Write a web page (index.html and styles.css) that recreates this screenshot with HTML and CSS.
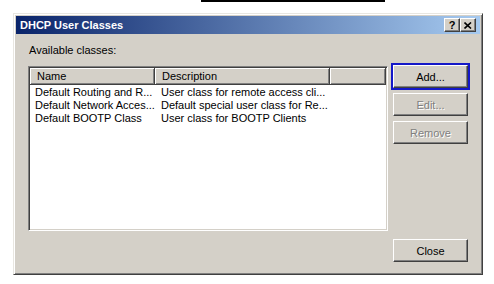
FILE: index.html
```html
<!DOCTYPE html>
<html lang="en">

<head>
    <meta charset="UTF-8">
    <title>DHCP User Classes</title>
    <link rel="stylesheet" href="styles.css">
</head>

<body>
    <div class="topline"></div>

    <div class="dialog">
        <div class="titlebar">
            <span class="title">DHCP User Classes</span>
            <div class="caption-btns">
                <span class="cbtn help">?</span>
                <span class="cbtn">
                    <svg width="8" height="7" viewBox="0 0 8 7">
                        <path d="M0.5 0.5 L7 6.5 M7 0.5 L0.5 6.5" stroke="#000" stroke-width="1.6" fill="none"/>
                    </svg>
                </span>
            </div>
        </div>

        <div class="content">
            <div class="main">
                <div class="label">Available classes:</div>
                <div class="listbox">
                    <div class="header">
                        <div class="hcell col-name">Name</div>
                        <div class="hcell col-desc">Description</div>
                        <div class="hcell col-rest"></div>
                    </div>
                    <div class="row">
                        <div class="cell col-name">Default Routing and R...</div>
                        <div class="cell col-desc">User class for remote access cli...</div>
                    </div>
                    <div class="row">
                        <div class="cell col-name">Default Network Acces...</div>
                        <div class="cell col-desc">Default special user class for Re...</div>
                    </div>
                    <div class="row">
                        <div class="cell col-name">Default BOOTP Class</div>
                        <div class="cell col-desc">User class for BOOTP Clients</div>
                    </div>
                </div>
            </div>

            <div class="side">
                <div class="btn-stack">
                    <button class="btn default">Add...</button>
                    <button class="btn" disabled>Edit...</button>
                    <button class="btn" disabled>Remove</button>
                </div>
                <button class="btn">Close</button>
            </div>
        </div>
    </div>
</body>

</html>
```

FILE: styles.css
```css
body {
    margin: 0;
    background: #fff;
    font-family: 'Liberation Sans', Arial, sans-serif;
    font-size: 11px;
    color: #000;
}

.topline {
    margin-left: 201px;
    width: 184px;
    height: 2px;
    background: #000;
}

.dialog {
    box-sizing: border-box;
    width: 470px;
    height: 262px;
    margin: 11px 0 0 13px;
    background: #d4d0c8;
    border: 1px solid;
    border-color: #e8e6e1 #404040 #404040 #e8e6e1;
    box-shadow: inset 1px 1px #fff, inset -1px -1px #808080;
    padding: 2px;
    display: flex;
    flex-direction: column;
}

.titlebar {
    height: 18px;
    display: flex;
    align-items: flex-start;
    justify-content: space-between;
    background: linear-gradient(to right, #0a246a, #a6caf0);
}

.title {
    color: #fff;
    font-weight: bold;
    line-height: 18px;
    padding-left: 4px;
}

.caption-btns {
    display: flex;
    margin: 2px 4px 0 0;
}

.cbtn {
    box-sizing: border-box;
    width: 16px;
    height: 14px;
    background: #d4d0c8;
    border: 1px solid;
    border-color: #fff #404040 #404040 #fff;
    box-shadow: inset -1px -1px #808080;
    display: flex;
    align-items: center;
    justify-content: center;
}

.help {
    font-weight: bold;
    font-size: 11px;
    line-height: 1;
}

.content {
    flex: 1;
    display: flex;
    gap: 5px;
    padding: 10px 11px 10px 12px;
}

.main {
    width: 360px;
}

.label {
    line-height: 13px;
    padding-left: 1px;
    margin-bottom: 9px;
}

.listbox {
    box-sizing: border-box;
    height: 165px;
    background: #fff;
    border: 1px solid;
    border-color: #808080 #fff #fff #808080;
    box-shadow: inset 1px 1px #404040, inset -1px -1px #d4d0c8;
    padding: 1px;
}

.header {
    display: flex;
    height: 17px;
}

.hcell {
    box-sizing: border-box;
    background: #d4d0c8;
    border-right: 1px solid #404040;
    border-bottom: 1px solid #404040;
    box-shadow: inset 1px 1px #fff, inset -1px -1px #808080;
    line-height: 16px;
    padding-left: 7px;
}

.col-name {
    width: 125px;
    flex: none;
}

.col-desc {
    width: 175px;
    flex: none;
}

.col-rest {
    flex: 1;
}

.row {
    display: flex;
    line-height: 13px;
}

.row:first-of-type {
    margin-top: 1px;
}

.header + .row {
    margin-top: 1px;
}

.cell {
    white-space: nowrap;
    overflow: hidden;
}

.cell.col-name {
    padding-left: 5px;
    box-sizing: border-box;
}

.cell.col-desc {
    padding-left: 6px;
    box-sizing: border-box;
    width: 200px;
}

.side {
    width: 75px;
    display: flex;
    flex-direction: column;
    justify-content: space-between;
    padding-top: 21px;
}

.btn-stack {
    display: flex;
    flex-direction: column;
    gap: 5px;
}

.btn {
    box-sizing: border-box;
    width: 75px;
    height: 23px;
    margin: 0;
    padding: 0;
    background: #d4d0c8;
    font-family: 'Liberation Sans', Arial, sans-serif;
    font-size: 11px;
    color: #000;
    border: 1px solid;
    border-color: #fff #404040 #404040 #fff;
    box-shadow: inset -1px -1px #808080;
}

.btn:disabled {
    color: #808080;
    text-shadow: 1px 1px #fff;
}

.default {
    outline: 2px solid #1418c8;
    outline-offset: 0;
}
```
